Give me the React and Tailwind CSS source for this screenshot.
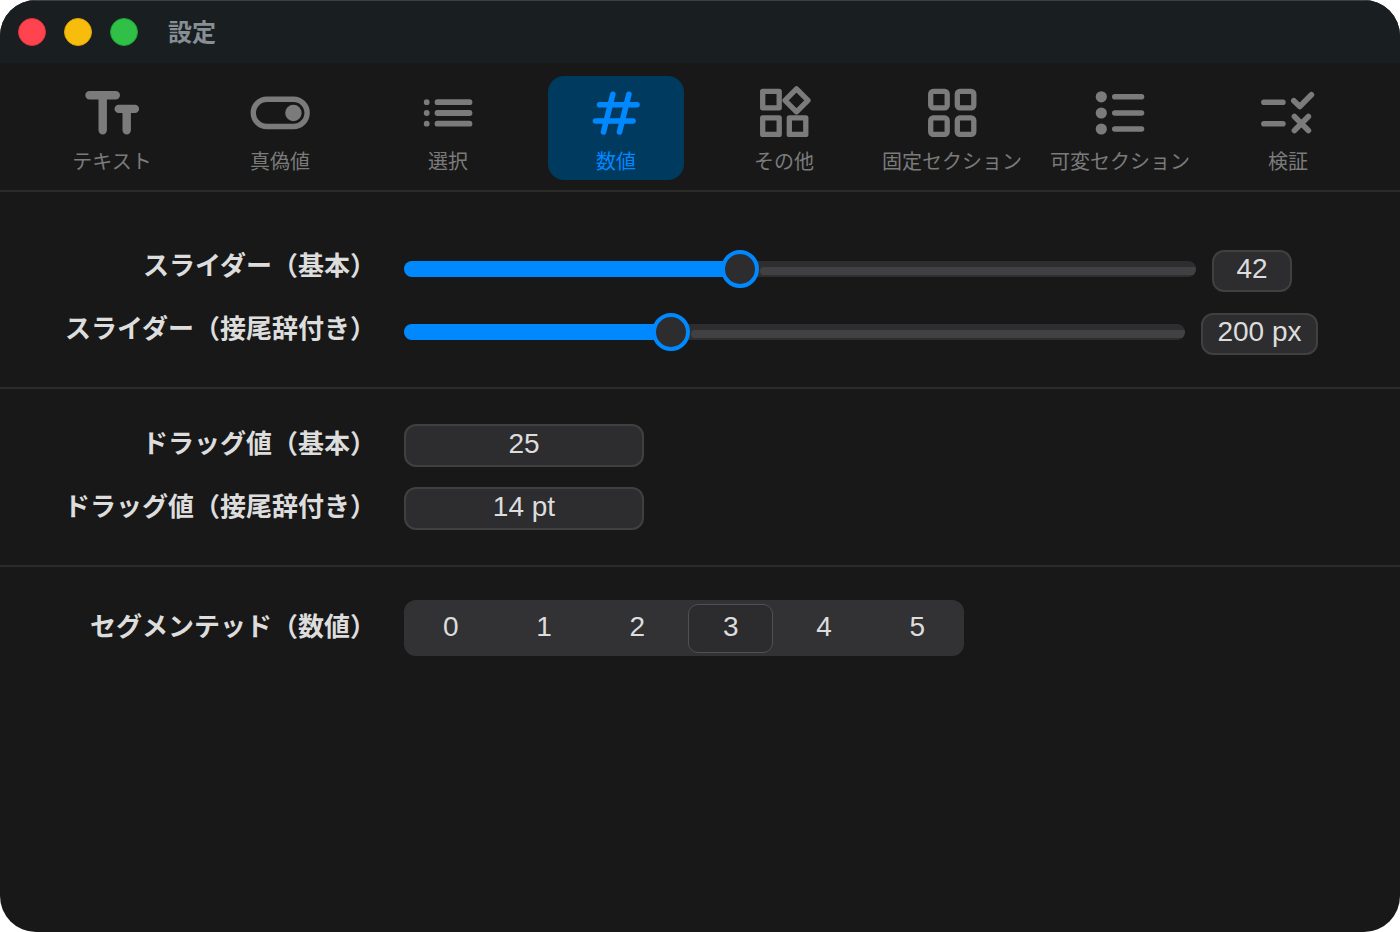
import { useState } from "react";

const trafficLights = [
  { label: "閉じる", tone: "border-[#e5303d] bg-[#ff4450]" },
  { label: "しまう", tone: "border-[#dfa407] bg-[#f8bd0c]" },
  { label: "拡大", tone: "border-[#1ca431] bg-[#30c048]" },
];

const tabs = [
  {
    title: "テキスト",
    icon: (
      <g strokeWidth="8.4">
        <path d="M9.5 14.3h26.3M22.7 14.3v35" />
        <path d="M38.7 27.9h16.2M46.7 27.9v21.4" />
      </g>
    ),
  },
  {
    title: "真偽値",
    icon: (
      <g strokeWidth="5.4">
        <rect x="5.3" y="18.3" width="53.8" height="27.2" rx="13.6" />
        <circle cx="45.4" cy="32" r="8.2" fill="currentColor" stroke="none" />
      </g>
    ),
  },
  {
    title: "選択",
    icon: (
      <g strokeWidth="5.8">
        <path d="M10.7 21.2h.01M10.7 32h.01M10.7 42.7h.01" />
        <path d="M21.5 21.2h32M21.5 32h32M21.5 42.7h32" />
      </g>
    ),
  },
  {
    title: "数値",
    icon: (
      <g strokeWidth="5.6">
        <path d="M15.5 23.7H53M11.5 40H49" />
        <path d="M28.8 13.3 19.5 51M44.9 13.3 35.5 51" />
      </g>
    ),
  },
  {
    title: "その他",
    icon: (
      <g strokeWidth="5.3">
        <rect x="10.7" y="10.3" width="16.5" height="16.5" />
        <rect x="10.7" y="36.9" width="16.5" height="16.5" />
        <rect x="37.3" y="36.9" width="16.5" height="16.5" />
        <path d="M44.5 7.8 56 19.3 44.5 30.8 33 19.3z" />
      </g>
    ),
  },
  {
    title: "固定セクション",
    icon: (
      <g strokeWidth="5.3">
        <rect x="10.7" y="10.3" width="16.5" height="16.5" rx="2.6" />
        <rect x="37.3" y="10.3" width="16.5" height="16.5" rx="2.6" />
        <rect x="10.7" y="36.9" width="16.5" height="16.5" rx="2.6" />
        <rect x="37.3" y="36.9" width="16.5" height="16.5" rx="2.6" />
      </g>
    ),
  },
  {
    title: "可変セクション",
    icon: (
      <g strokeWidth="5.6">
        <path strokeWidth="11.2" d="M13.3 15.8h.01M13.3 32h.01M13.3 48h.01" />
        <path d="M26.8 15.8h26.7M26.8 32h26.7M26.8 48h26.7" />
      </g>
    ),
  },
  {
    title: "検証",
    icon: (
      <g strokeWidth="5.6">
        <path d="M7.9 21.2h19M7.9 42.7h19" />
        <path d="m37.8 19.7 6 5.8 11.6-11.8" />
        <path d="m38.4 35.5 14 14M52.4 35.5l-14 14" />
      </g>
    ),
  },
];

const segments = [0, 1, 2, 3, 4, 5];

const fieldClass =
  "rounded-xl border-2 border-[#404041] bg-[#2d2d2f] pb-1 text-center text-[28px] leading-8 text-[#dddddd] outline-none";

const labelClass =
  "w-[376px] shrink-0 whitespace-nowrap text-right text-[26px] font-bold text-[#dddddd]";

const SliderRow = ({ id, label, max, initial, suffix, className, fieldWidth }) => {
  const [value, setValue] = useState(initial);
  const ratio = value / max;

  return (
    <div className={`flex h-[43px] items-start gap-7 ${className}`}>
      <label htmlFor={id} className={`leading-8 ${labelClass}`}>
        {label}
      </label>
      <div className="flex min-w-0 flex-1 items-start gap-4">
        <div className="grid min-w-0 flex-1 items-center">
          <div className="col-start-1 row-start-1 flex h-4 items-end overflow-hidden rounded-full bg-[#2e2e30]">
            <div
              className="h-4 shrink-0 bg-[#0088ff]"
              style={{ width: `calc(19px + (100% - 38px) * ${ratio})` }}
            />
            <div className="mb-0.5 ml-5 h-2 flex-1 rounded-l-full bg-[#414143]" />
          </div>
          <input
            id={id}
            type="range"
            min="0"
            max={max}
            value={value}
            onChange={(e) => setValue(Number(e.target.value))}
            className="z-10 col-start-1 row-start-1 h-[38px] w-full appearance-none bg-transparent [&::-webkit-slider-thumb]:size-[38px] [&::-webkit-slider-thumb]:appearance-none [&::-webkit-slider-thumb]:rounded-full [&::-webkit-slider-thumb]:border-4 [&::-webkit-slider-thumb]:border-[#0088ff] [&::-webkit-slider-thumb]:bg-[#2d2d2f]"
          />
        </div>
        <input
          type="text"
          aria-label={label}
          readOnly
          value={`${value}${suffix}`}
          className={`h-[42px] shrink-0 ${fieldWidth} ${fieldClass}`}
        />
      </div>
    </div>
  );
};

const DragRow = ({ id, label, value }) => (
  <div className="flex items-start gap-7">
    <label htmlFor={id} className={`leading-10 ${labelClass}`}>
      {label}
    </label>
    <input
      id={id}
      type="text"
      defaultValue={value}
      className={`h-[43px] w-60 ${fieldClass}`}
    />
  </div>
);

const App = () => {
  const [activeTab, setActiveTab] = useState("数値");
  const [segment, setSegment] = useState(3);

  return (
    <div className="min-h-screen bg-white font-['Liberation_Sans','Noto_Sans_CJK_JP',sans-serif]">
      <div className="flex min-h-screen flex-col overflow-hidden rounded-[36px] bg-[#181818]">
        <header className="flex h-16 items-center border-b border-t border-b-[#181b1d] border-t-[#3d4245] bg-[#191e21] px-[18px]">
          <div className="flex gap-[18px]">
            {trafficLights.map((light) => (
              <button
                key={light.label}
                type="button"
                aria-label={light.label}
                className={`size-7 rounded-full border ${light.tone}`}
              />
            ))}
          </div>
          <h1 className="ml-[30px] pt-0.5 text-2xl font-bold text-[#878e94]">
            設定
          </h1>
        </header>

        <nav className="grid grid-cols-8 gap-8 border-b-2 border-[#2b2b2b] px-11 pb-2.5 pt-3">
          {tabs.map((tab) => (
            <button
              key={tab.title}
              type="button"
              onClick={() => setActiveTab(tab.title)}
              className={`flex h-[104px] flex-col items-center rounded-2xl pt-[5px] ${
                tab.title === activeTab
                  ? "bg-[#003a5f] text-[#0088ff]"
                  : "text-[#7b7b7b]"
              }`}
            >
              <svg
                aria-hidden="true"
                viewBox="0 0 64 64"
                fill="none"
                stroke="currentColor"
                strokeLinecap="round"
                strokeLinejoin="round"
                className="size-16 shrink-0"
              >
                {tab.icon}
              </svg>
              <span className="whitespace-nowrap text-xl leading-[34px]">
                {tab.title}
              </span>
            </button>
          ))}
        </nav>

        <main>
          <section className="flex flex-col gap-5 border-b-2 border-[#2b2b2b] pb-[31px] pt-[58px]">
            <SliderRow
              id="slider-basic"
              label="スライダー（基本）"
              max={100}
              initial={42}
              suffix=""
              className="pr-[108px]"
              fieldWidth="w-20"
            />
            <SliderRow
              id="slider-suffix"
              label="スライダー（接尾辞付き）"
              max={600}
              initial={200}
              suffix=" px"
              className="pr-[82px]"
              fieldWidth="w-[117px]"
            />
          </section>

          <section className="flex flex-col gap-5 border-b-2 border-[#2b2b2b] py-[35px]">
            <DragRow id="drag-basic" label="ドラッグ値（基本）" value="25" />
            <DragRow
              id="drag-suffix"
              label="ドラッグ値（接尾辞付き）"
              value="14 pt"
            />
          </section>

          <section className="flex items-start gap-7 py-[33px]">
            <span id="segment-label" className={`leading-[54px] ${labelClass}`}>
              セグメンテッド（数値）
            </span>
            <div
              role="radiogroup"
              aria-labelledby="segment-label"
              className="grid h-14 w-[560px] grid-cols-6 rounded-xl bg-[#323234]"
            >
              {segments.map((item) => (
                <label
                  key={item}
                  htmlFor={`segment-${item}`}
                  className="relative flex px-1 pb-[3px] pt-1"
                >
                  <input
                    id={`segment-${item}`}
                    type="radio"
                    name="segment"
                    checked={segment === item}
                    onChange={() => setSegment(item)}
                    className="sr-only"
                  />
                  <span
                    className={`flex flex-1 items-center justify-center rounded-[10px] border pb-1 text-[28px] leading-8 text-[#dddddd] ${
                      segment === item
                        ? "border-[#515153] bg-[#2c2c2e]"
                        : "border-transparent"
                    }`}
                  >
                    {item}
                  </span>
                </label>
              ))}
            </div>
          </section>
        </main>
      </div>
    </div>
  );
};

export default App;
